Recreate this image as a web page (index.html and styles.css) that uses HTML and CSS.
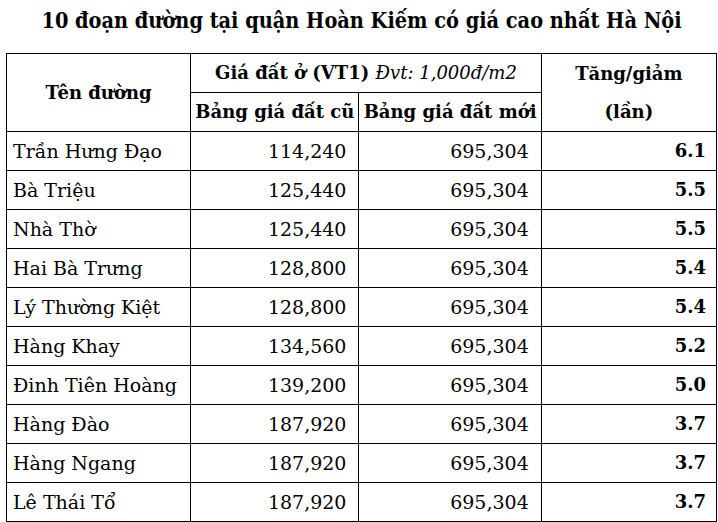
FILE: index.html
```html
<!DOCTYPE html>
<html lang="vi">
<head>
<meta charset="utf-8">
<link rel="stylesheet" href="styles.css">
</head>
<body>
<div class="page">
  <h1 class="title">10 đoạn đường tại quận Hoàn Kiếm có giá cao nhất Hà Nội</h1>
  <table class="grid">
    <colgroup>
      <col class="c1"><col class="c2"><col class="c3"><col class="c4">
    </colgroup>
    <thead>
      <tr>
        <th rowspan="2" class="h-name">Tên đường</th>
        <th colspan="2" class="h-group">Giá đất ở (VT1) <span class="unit">Đvt: 1,000đ/m2</span></th>
        <th rowspan="2" class="h-ratio">Tăng/giảm<br>(lần)</th>
      </tr>
      <tr>
        <th class="h-sub">Bảng giá đất cũ</th>
        <th class="h-sub">Bảng giá đất mới</th>
      </tr>
    </thead>
    <tbody>
      <tr><td class="name">Trần Hưng Đạo</td><td class="num">114,240</td><td class="num">695,304</td><td class="ratio">6.1</td></tr>
      <tr><td class="name">Bà Triệu</td><td class="num">125,440</td><td class="num">695,304</td><td class="ratio">5.5</td></tr>
      <tr><td class="name">Nhà Thờ</td><td class="num">125,440</td><td class="num">695,304</td><td class="ratio">5.5</td></tr>
      <tr><td class="name">Hai Bà Trưng</td><td class="num">128,800</td><td class="num">695,304</td><td class="ratio">5.4</td></tr>
      <tr><td class="name">Lý Thường Kiệt</td><td class="num">128,800</td><td class="num">695,304</td><td class="ratio">5.4</td></tr>
      <tr><td class="name">Hàng Khay</td><td class="num">134,560</td><td class="num">695,304</td><td class="ratio">5.2</td></tr>
      <tr><td class="name">Đinh Tiên Hoàng</td><td class="num">139,200</td><td class="num">695,304</td><td class="ratio">5.0</td></tr>
      <tr><td class="name">Hàng Đào</td><td class="num">187,920</td><td class="num">695,304</td><td class="ratio">3.7</td></tr>
      <tr><td class="name">Hàng Ngang</td><td class="num">187,920</td><td class="num">695,304</td><td class="ratio">3.7</td></tr>
      <tr><td class="name">Lê Thái Tổ</td><td class="num">187,920</td><td class="num">695,304</td><td class="ratio">3.7</td></tr>
    </tbody>
  </table>
</div>
</body>
</html>
```
FILE: styles.css
```css
html, body {
  margin: 0;
  padding: 0;
  background: #fff;
}
.page {
  padding: 0 0 0 6px;
  font-family: "DejaVu Serif", "Liberation Serif", serif;
  color: #000;
}
.title {
  margin: 0;
  height: 53px;
  padding-top: 7px;
  box-sizing: border-box;
  font-size: 21.5px;
  font-weight: bold;
  font-stretch: condensed;
  text-align: center;
  width: 711px;
  line-height: 28px;
}
.grid {
  border-collapse: collapse;
  table-layout: fixed;
  width: 711px;
  font-size: 19px;
}
.c1 { width: 184px; }
.c2 { width: 168px; }
.c3 { width: 182px; }
.c4 { width: 175px; }
.grid th, .grid td {
  border: 1px solid #000;
  padding: 0;
  height: 38px;
  line-height: 22px;
  white-space: nowrap;
  overflow: hidden;
}
.grid th {
  font-weight: bold;
  font-size: 18px;
  text-align: center;
}
.h-name {
  font-size: 19px;
}
.h-ratio {
  line-height: 38px !important;
}
.unit {
  font-weight: normal;
  font-style: italic;
}
.name {
  text-align: left;
  padding-left: 6px !important;
}
.num {
  text-align: right;
  padding-right: 12px !important;
}
.ratio {
  text-align: right;
  padding-right: 10px !important;
  font-weight: bold;
  font-size: 18px;
}
```
